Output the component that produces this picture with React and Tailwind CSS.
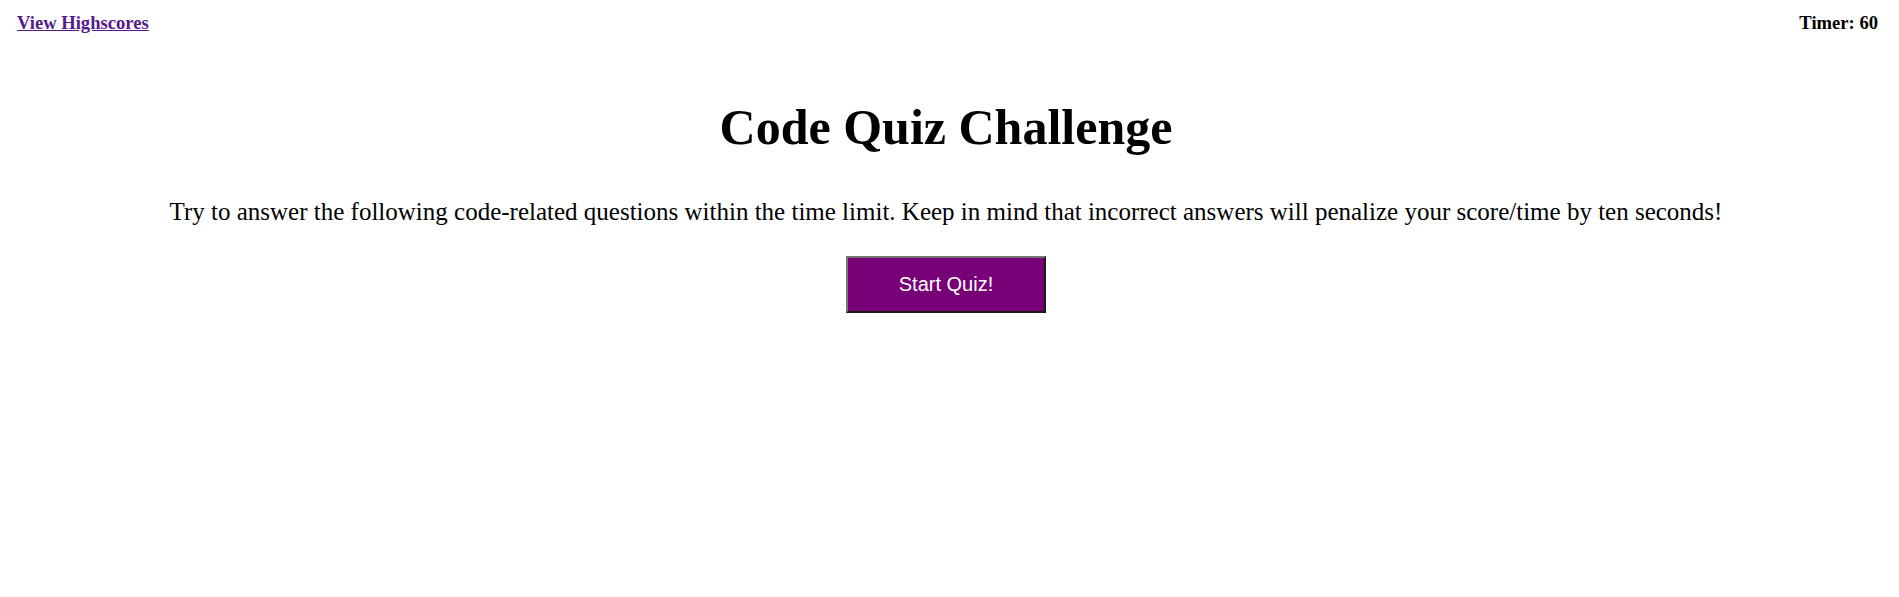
export default function App() {
  return (
    <div className="min-h-[597px] bg-white text-black" style={{ fontFamily: '"Liberation Serif", serif' }}>
      <header className="flex justify-between items-center px-[17px] pt-[9px] font-bold text-[18.6px]">
        <a href="#" className="text-[#551a8b] underline">View Highscores</a>
        <span className="pr-[4px]">Timer: 60</span>
      </header>
      <main className="flex flex-col items-center text-center pr-[7px]">
        <h1 className="font-bold text-[50px] mt-[59px] leading-tight">Code Quiz Challenge</h1>
        <p className="text-[25px] mt-[35px]">Try to answer the following code-related questions within the time limit. Keep in mind that incorrect answers will penalize your score/time by ten seconds!</p>
        <button
          className="mt-[25px] w-[200px] h-[57px] bg-[#770077] text-white text-[20px] border-2 border-solid border-t-[#767676] border-l-[#767676] border-b-[#1a1a1a] border-r-[#1a1a1a]"
          style={{ fontFamily: '"Liberation Sans", Arial, sans-serif' }}
        >
          Start Quiz!
        </button>
      </main>
    </div>
  );
}
